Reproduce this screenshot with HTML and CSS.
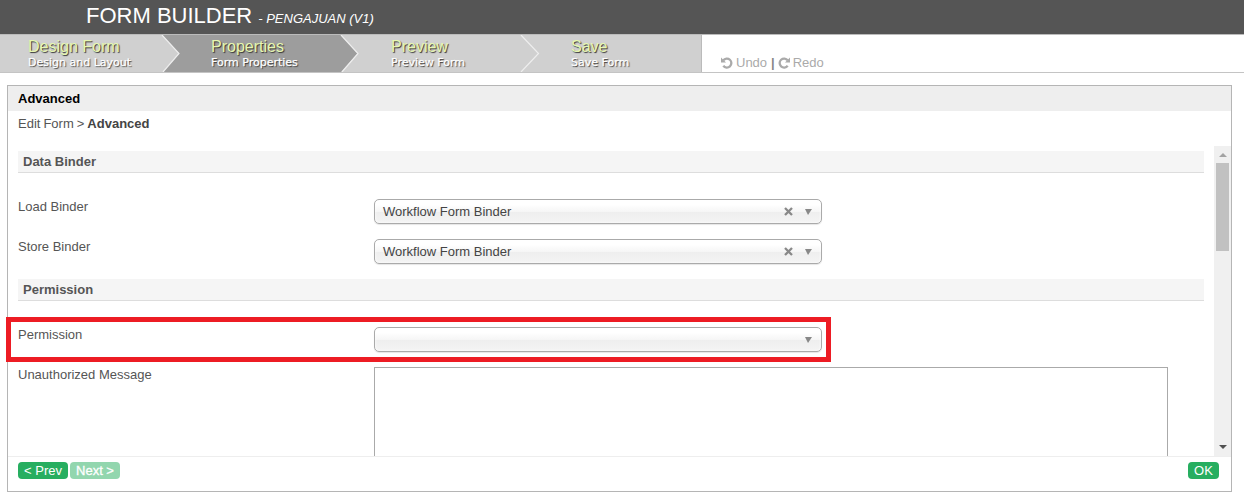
FILE: index.html
```html
<!DOCTYPE html>
<html lang="en">
<head>
<meta charset="utf-8">
<title>Form Builder</title>
<link rel="stylesheet" href="styles.css">
</head>
<body>
<header class="header"><h1 class="title">FORM BUILDER</h1><span class="subtitle">- PENGAJUAN (V1)</span></header>
<nav class="nav">
  <div class="steps">
    <div class="step step-first"><span class="step-title">Design Form</span><span class="step-desc">Design and Layout</span></div>
    <div class="step step-active"><span class="step-title">Properties</span><span class="step-desc">Form Properties</span></div>
    <div class="step"><span class="step-title">Preview</span><span class="step-desc">Preview Form</span></div>
    <div class="step step-last"><span class="step-title">Save</span><span class="step-desc">Save Form</span></div>
    <svg class="arrows" width="702" height="37" viewBox="0 0 702 37">
      <path class="fill-light" d="M162 0L179 18.500L163 37H160V0Z"/>
      <path class="fill-active" d="M339 0H341L357.500 18.500L341 37H339Z"/>
      <path class="edge" d="M162 0L179 18.500L163 37M341 0L358 18.500L342 37M521 0L538.500 18.500L521 37"/>
    </svg>
  </div>
  <div class="history">
    <svg class="history-icon" width="12" height="12" viewBox="0 0 12 12"><path class="curve" d="M2.300 3.300A4.500 4.500 0 1 1 2.300 8.800"/><path class="tip" d="M0 .5V5.500H5Z"/></svg>
    <span class="history-text">Undo</span><b class="bar">|</b>
    <svg class="history-icon redo" width="12" height="12" viewBox="0 0 12 12"><path class="curve" d="M2.300 3.300A4.500 4.500 0 1 1 2.300 8.800"/><path class="tip" d="M0 .5V5.500H5Z"/></svg>
    <span class="history-text">Redo</span>
  </div>
</nav>
<main class="panel">
  <h2 class="panel-title">Advanced</h2>
  <div class="crumbs">Edit Form &gt; <b>Advanced</b></div>
  <div class="viewport">
    <div class="form">
      <h3 class="section">Data Binder</h3>
      <div class="row"><label class="label">Load Binder</label>
        <div class="select"><span class="value">Workflow Form Binder</span><svg class="clear" width="9" height="9" viewBox="0 0 9 9"><path d="M1 1L8 8M8 1L1 8"/></svg><i class="caret"></i></div></div>
      <div class="row"><label class="label">Store Binder</label>
        <div class="select"><span class="value">Workflow Form Binder</span><svg class="clear" width="9" height="9" viewBox="0 0 9 9"><path d="M1 1L8 8M8 1L1 8"/></svg><i class="caret"></i></div></div>
      <h3 class="section">Permission</h3>
      <div class="row"><label class="label">Permission</label>
        <div class="select"><span class="value"></span><i class="caret"></i></div></div>
      <div class="row"><label class="label">Unauthorized Message</label><div class="textarea"></div></div>
    </div>
    <div class="scrollbar"><i class="scroll-up"></i><div class="thumb"></div><i class="scroll-down"></i></div>
  </div>
  <footer class="footer"><span class="button">&lt; Prev</span><span class="button disabled">Next &gt;</span><span class="button ok">OK</span></footer>
  <div class="highlight"></div>
</main>
</body>
</html>
```
FILE: styles.css
```css
* { box-sizing: border-box; }
body {
  margin: 0;
  height: 501px;
  overflow: hidden;
  background: #fff;
  color: #555;
  font: 13px/16px "Liberation Sans", Arial, sans-serif;
}
.header {
  display: flex;
  align-items: baseline;
  height: 34px;
  padding: 3px 0 0 86px;
  background: #555;
  color: #fff;
}
.title { margin: 0; font-size: 22px; line-height: 26px; font-weight: 400; }
.subtitle { margin-left: 6px; font-size: 13px; font-style: italic; }
.nav {
  display: flex;
  height: 39px;
  border-top: 1px solid #bbb;
  border-bottom: 1px solid #c4c4c4;
}
.steps {
  position: relative;
  display: flex;
  width: 702px;
  background: #d0d0d0;
  border-right: 1px solid #bbb;
}
.step {
  display: flex;
  flex-direction: column;
  width: 180px;
  padding: 3px 0 0 51px;
}
.step-first { width: 162px; padding-left: 28px; }
.step-active { width: 178px; padding-left: 49px; background: #9d9d9d; }
.step-title {
  position: relative;
  z-index: 1;
  color: #e7f7b0;
  font-size: 16px;
  line-height: 18px;
  text-shadow: 1px 1px 1px #333;
}
.step-desc {
  position: relative;
  z-index: 1;
  color: #fff;
  font: 11px/13px "DejaVu Sans", sans-serif;
  text-shadow: 1px 1px 1px #333;
  -webkit-text-stroke: .25px #fff;
}
.arrows { position: absolute; left: 0; top: 0; }
.fill-light { fill: #d0d0d0; }
.fill-active { fill: #9d9d9d; }
.edge { fill: none; stroke: #eee; stroke-width: 1.2; }
.history {
  display: flex;
  align-items: center;
  height: 16px;
  margin: 20px 0 0 19px;
  color: #aaa;
}
.history-text { margin-left: 3px; }
.bar { margin: 0 3px 0 4px; color: #888; }
.redo { transform: scaleX(-1); }
.curve { fill: none; stroke: #aaa; stroke-width: 2.3; }
.tip { fill: #aaa; }
.panel {
  position: relative;
  display: flex;
  flex-direction: column;
  width: 1225px;
  height: 407px;
  margin: 12px 0 0 7px;
  border: 1px solid #b5b5b5;
}
.panel-title {
  margin: 0;
  height: 25px;
  padding-left: 10px;
  background: #eee;
  color: #000;
  font-size: 13px;
  line-height: 25px;
}
.crumbs { height: 35px; padding: 5px 0 0 10px; word-spacing: -.6px; }
.crumbs b { color: #444; }
.viewport { display: flex; height: 310px; overflow: hidden; }
.form { width: 1206px; padding: 5px 10px 0; }
.section {
  height: 22px;
  margin: 0 0 26px;
  padding-left: 5px;
  border-bottom: 1px solid #ddd;
  background: #f5f5f5;
  font-size: 13px;
  line-height: 21px;
}
.row { display: flex; height: 40px; }
.label { width: 356px; }
.select {
  display: flex;
  align-items: center;
  width: 448px;
  height: 25px;
  padding: 0 9px 0 8px;
  border: 1px solid #aaa;
  border-radius: 5px;
  background: linear-gradient(#fff 20%, #f6f6f6 50%, #eee 52%, #f4f4f4 100%);
  box-shadow: inset 0 0 3px #fff, 0 1px 1px rgba(0,0,0,.1);
  color: #444;
}
.value { flex: 1; }
.clear { margin-right: 12px; fill: none; stroke: #888; stroke-width: 2.3; }
.caret { border: 3.5px solid transparent; border-width: 6px 4px 0 3px; border-top-color: #888; }
.highlight {
  position: absolute;
  left: -2px;
  top: 231px;
  width: 825px;
  height: 45px;
  border: 5px solid #ed1c24;
}
.textarea { width: 794px; height: 120px; border: 1px solid #aaa; }
.scrollbar {
  display: flex;
  flex-direction: column;
  align-items: center;
  width: 17px;
  background: #f0f0f0;
}
.scroll-up { margin: 7px 0 6px; border: 4px solid transparent; border-bottom-color: #a3a3a3; border-top: 0; }
.thumb { width: 13px; height: 88px; background: #c1c1c1; }
.scroll-down { margin: auto 0 7px; border: 4px solid transparent; border-top-color: #505050; border-bottom: 0; }
.footer {
  display: flex;
  gap: 2px;
  flex: 1;
  padding: 5px 12px 0 10px;
  border-top: 1px solid #eee;
}
.button {
  width: 50px;
  height: 17px;
  border-radius: 4px;
  background: #27ae60;
  color: #fff;
  line-height: 17px;
  text-align: center;
}
.disabled { opacity: .5; -webkit-text-stroke: .3px #fff; }
.ok { width: 31px; margin-left: auto; }
```
